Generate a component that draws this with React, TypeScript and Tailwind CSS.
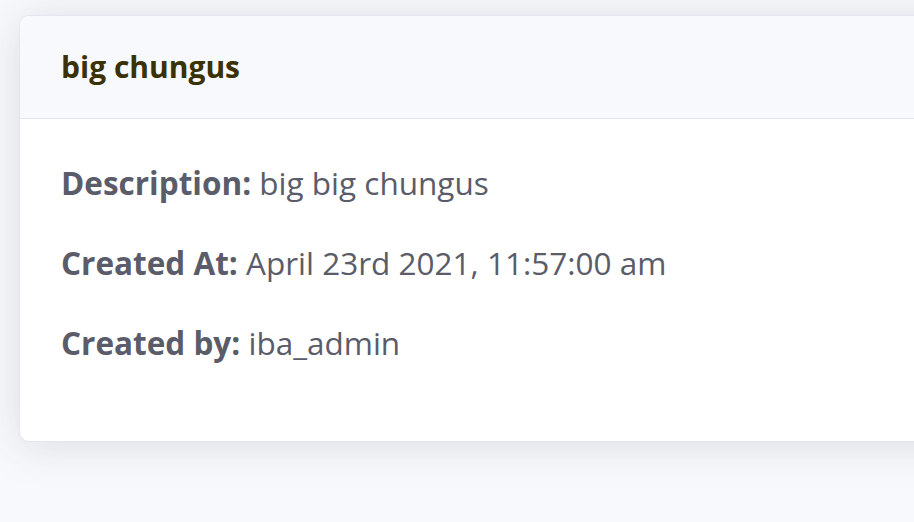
import React from 'react';

interface DetailRowProps {
  label: string;
  value: string;
}

const DetailRow: React.FC<DetailRowProps> = ({ label, value }) => (
  <p className="leading-[40px]">
    <span className="font-bold">{label}</span> {value}
  </p>
);

export default function App() {
  const rows: DetailRowProps[] = [
    { label: 'Description:', value: 'big big chungus' },
    { label: 'Created At:', value: 'April 23rd 2021, 11:57:00 am' },
    { label: 'Created by:', value: 'iba_admin' },
  ];

  return (
    <div
      className="h-[522px] w-[914px] overflow-hidden bg-[#f8f9fc] pt-[15px] pl-[19px]"
      style={{ fontFamily: '"Open Sans", "Noto Sans", sans-serif' }}
    >
      <div className="w-[1000px] overflow-hidden rounded-[10px] border border-[#e3e6f0] bg-white shadow-[0_4px_45px_0_rgba(58,59,69,0.15)]">
        {/* Card header */}
        <div className="border-b border-[#e3e6f0] bg-[#f8f9fc] px-[41px] py-[31px]">
          <h2 className="text-[30px] leading-[40px] font-bold text-[#3a3206]">big chungus</h2>
        </div>

        {/* Card body */}
        <div className="flex flex-col gap-[40px] px-[41px] pt-[44px] pb-[78px] text-[31.5px] text-[#5a5c69]">
          {rows.map((row) => (
            <DetailRow key={row.label} label={row.label} value={row.value} />
          ))}
        </div>
      </div>
    </div>
  );
}
